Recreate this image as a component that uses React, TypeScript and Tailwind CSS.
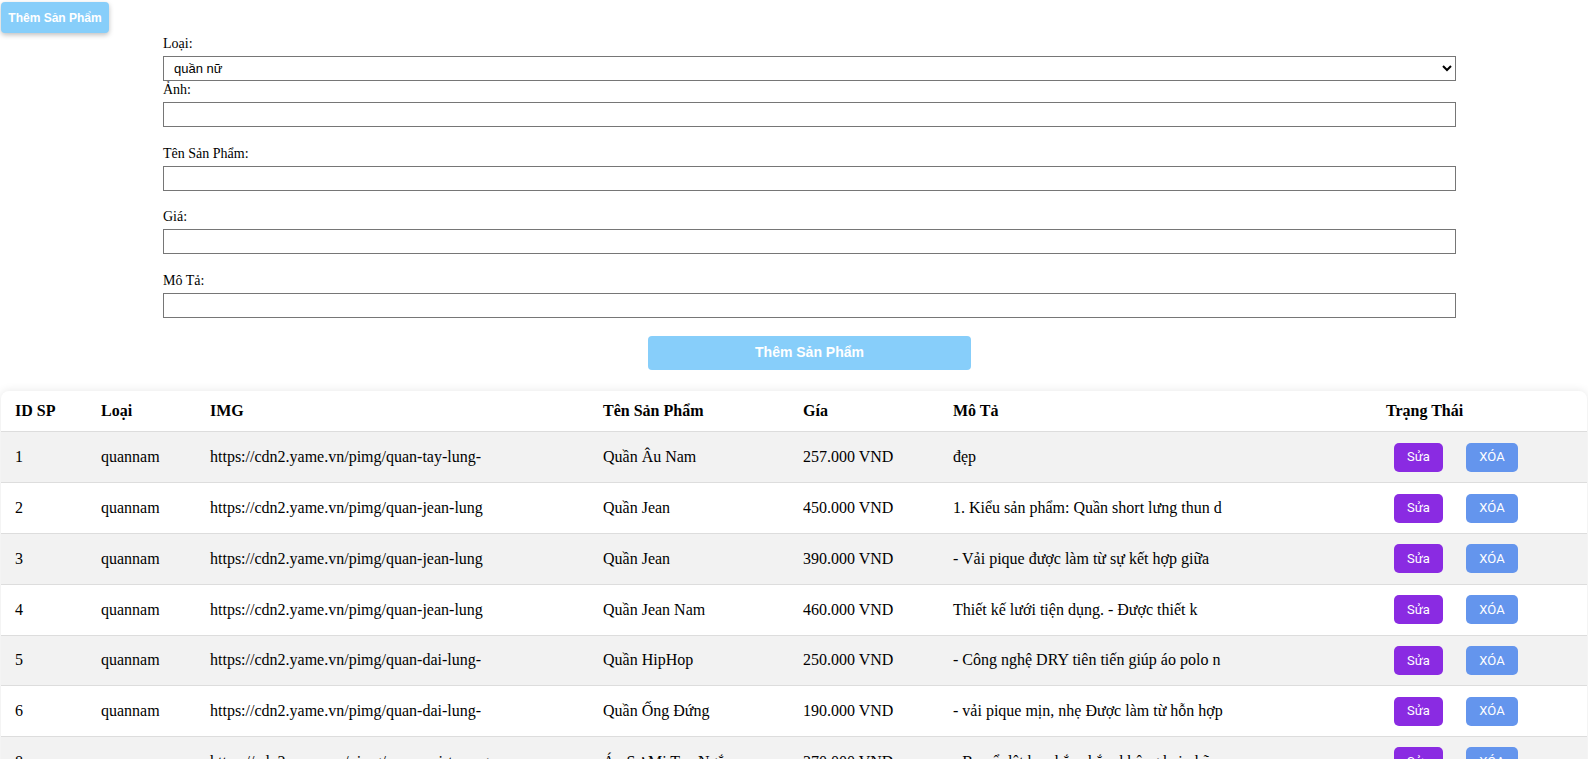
import React from "react";

const rows = [
  ["1", "quannam", "https://cdn2.yame.vn/pimg/quan-tay-lung-", "Quần Âu Nam", "257.000 VND", "đẹp"],
  ["2", "quannam", "https://cdn2.yame.vn/pimg/quan-jean-lung", "Quần Jean", "450.000 VND", "1. Kiểu sản phẩm: Quần short lưng thun d"],
  ["3", "quannam", "https://cdn2.yame.vn/pimg/quan-jean-lung", "Quần Jean", "390.000 VND", "- Vải pique được làm từ sự kết hợp giữa"],
  ["4", "quannam", "https://cdn2.yame.vn/pimg/quan-jean-lung", "Quần Jean Nam", "460.000 VND", "Thiết kế lưới tiện dụng. - Được thiết k"],
  ["5", "quannam", "https://cdn2.yame.vn/pimg/quan-dai-lung-", "Quần HipHop", "250.000 VND", "- Công nghệ DRY tiên tiến giúp áo polo n"],
  ["6", "quannam", "https://cdn2.yame.vn/pimg/quan-dai-lung-", "Quần Ống Đứng", "190.000 VND", "- vải pique mịn, nhẹ Được làm từ hỗn hợp"],
  ["8", "quannam", "https://cdn2.yame.vn/pimg/ao-so-mi-tay-ng", "Áo Sơ Mi Tay Ngắn", "370.000 VND", "- Bo cổ dệt bo chắc chắn, không bai nhão"],
  ["9", "quannam", "https://cdn2.yame.vn/pimg/ao-so-mi-tay-ng", "Áo Sơ Mi Tay Dài", "320.000 VND", "- Vải kate mềm mại, thoáng mát khi mặc"],
];

const headers = ["ID SP", "Loại", "IMG", "Tên Sản Phẩm", "Gía", "Mô Tả", "Trạng Thái"];

function Field({ label }: { label: string }) {
  return (
    <>
      <label className="block pb-[4px] text-[14px] leading-[17px]">{label}</label>
      <input
        type="text"
        className="mb-[17.67px] block h-[25px] w-full border border-[#767676] bg-white px-[2px]"
      />
    </>
  );
}

export default function App() {
  return (
    <div className="h-screen overflow-hidden bg-white font-['Liberation_Serif',serif] text-black">
      <div className="flex pl-[1px] pt-[2px]">
        <button className="h-[31px] w-[108px] rounded-[4px] bg-[#87cefa] font-['Liberation_Sans',Arial,sans-serif] text-[12px] font-bold text-white shadow-[0_2px_5px_rgba(0,0,0,0.25)]">
          Thêm Sản Phẩm
        </button>
      </div>

      <form className="ml-[163px] mt-[2px] w-[1293px]">
        <label className="block pb-[4px] text-[14px] leading-[17px]">Loại:</label>
        <select
          defaultValue="quannu"
          className="block h-[25px] w-full border border-[#767676] bg-white pl-[6px] font-['Liberation_Sans',Arial,sans-serif] text-[13px]"
        >
          <option value="quannam">quần nam</option>
          <option value="quannu">quần nữ</option>
          <option value="aonam">áo nam</option>
        </select>
        <label className="block pb-[4px] text-[14px] leading-[17px]">Ảnh:</label>
        <input
          type="text"
          className="mb-[17.67px] block h-[25px] w-full border border-[#767676] bg-white px-[2px]"
        />
        <Field label="Tên Sản Phẩm:" />
        <Field label="Giá:" />
        <Field label="Mô Tả:" />
        <div className="flex justify-center">
          <button
            type="button"
            className="h-[34px] w-[323px] rounded-[4px] bg-[#87cefa] font-['Liberation_Sans',Arial,sans-serif] text-[14px] font-bold text-white"
          >
            Thêm Sản Phẩm
          </button>
        </div>
      </form>

      <div className="ml-[1px] mt-[21px] w-[1586px] rounded-t-[8px] bg-white shadow-[0_0_10px_rgba(0,0,0,0.1)]">
        <div className="grid h-[41.7px] grid-cols-[86px_109px_393px_200px_150px_433px_1fr] items-center border-b border-[#dddddd] text-[16px] font-bold">
          {headers.map((h) => (
            <div key={h} className="pl-[14px]">
              {h}
            </div>
          ))}
        </div>
        {rows.map((r, i) => (
          <div
            key={i}
            className={
              "grid h-[50.8px] grid-cols-[86px_109px_393px_200px_150px_433px_1fr] items-center border-b border-[#dddddd] text-[16px] " +
              (i % 2 === 0 ? "bg-[#f2f2f2]" : "bg-white")
            }
          >
            {r.map((c, j) => (
              <div key={j} className="whitespace-nowrap pl-[14px]">
                {c}
              </div>
            ))}
            <div className="flex items-center pl-[22px] font-['Roboto',Arial,sans-serif] text-[13px] text-white">
              <button className="h-[29px] w-[49px] rounded-[5px] bg-[#8a2be2]">Sửa</button>
              <button className="ml-[23px] h-[29px] w-[52px] rounded-[5px] bg-[#6495ed]">XÓA</button>
            </div>
          </div>
        ))}
      </div>
    </div>
  );
}
